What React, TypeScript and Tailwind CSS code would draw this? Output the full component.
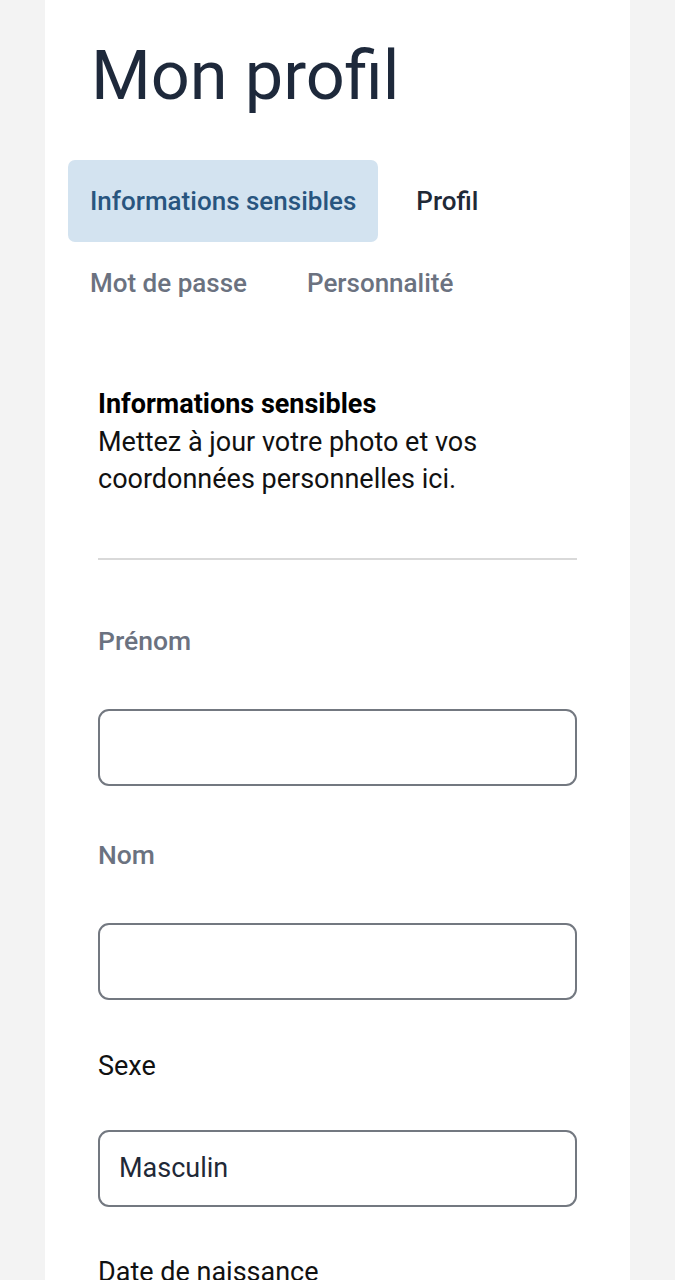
import React from "react";

const tabs = [
  { label: "Informations sensibles", active: true },
  { label: "Profil", dark: true },
  { label: "Mot de passe" },
  { label: "Personnalité" },
];

function Field({
  label,
  value,
  muted,
  first,
}: {
  label: string;
  value?: string;
  muted?: boolean;
  first?: boolean;
}) {
  return (
    <div className={first ? "flex flex-col mt-[12px]" : "flex flex-col"}>
      <label
        className={
          muted
            ? "text-[26.5px] leading-[36px] font-medium text-[#6b7280] pt-[51px] pb-[50px]"
            : "text-[27px] leading-[36px] text-[#111111] pt-[48px] pb-[46px]"
        }
      >
        {label}
      </label>
      <div className="h-[77px] w-full rounded-[11px] border-2 border-[#737880] flex items-center px-[19px] text-[27px] text-[#1f2937]">
        {value}
      </div>
    </div>
  );
}

export default function App() {
  return (
    <div
      className="min-h-screen bg-[#f3f3f3] h-[1280px] overflow-hidden"
      style={{ fontFamily: "Roboto, 'Noto Sans', sans-serif" }}
    >
      <div className="mx-[45px] bg-white min-h-[1280px] px-[23px]">
        <h1 className="pt-[34px] pl-[23px] text-[68.5px] leading-[84px] text-[#1e293b] font-normal">
          Mon profil
        </h1>

        <div className="mt-[42px] flex flex-wrap gap-x-[16px]">
          {tabs.map((t) => (
            <div
              key={t.label}
              className={
                "h-[82px] px-[22px] flex items-center rounded-[7px] text-[26px] font-medium " +
                (t.active
                  ? "bg-[#d3e3f0] text-[#28557f]"
                  : t.dark
                  ? "text-[#1f2937]"
                  : "text-[#6b7280]")
              }
            >
              {t.label}
            </div>
          ))}
        </div>

        <div className="px-[30px] pt-[62px]">
          <div className="leading-[37.5px] text-[#111111]">
            <p className="font-bold text-black text-[27px]">Informations sensibles</p>
            <p className="text-[27px]">
              Mettez à jour votre photo et vos coordonnées personnelles ici.
            </p>
          </div>
          <div className="mt-[59px] h-[2px] bg-[#d9d9d9]" />

          <Field label="Prénom" muted first />
          <Field label="Nom" muted />
          <Field label="Sexe" value="Masculin" />
          <label className="block pt-[47px] text-[27px] leading-[36px] text-[#111111]">
            Date de naissance
          </label>
        </div>
      </div>
    </div>
  );
}
